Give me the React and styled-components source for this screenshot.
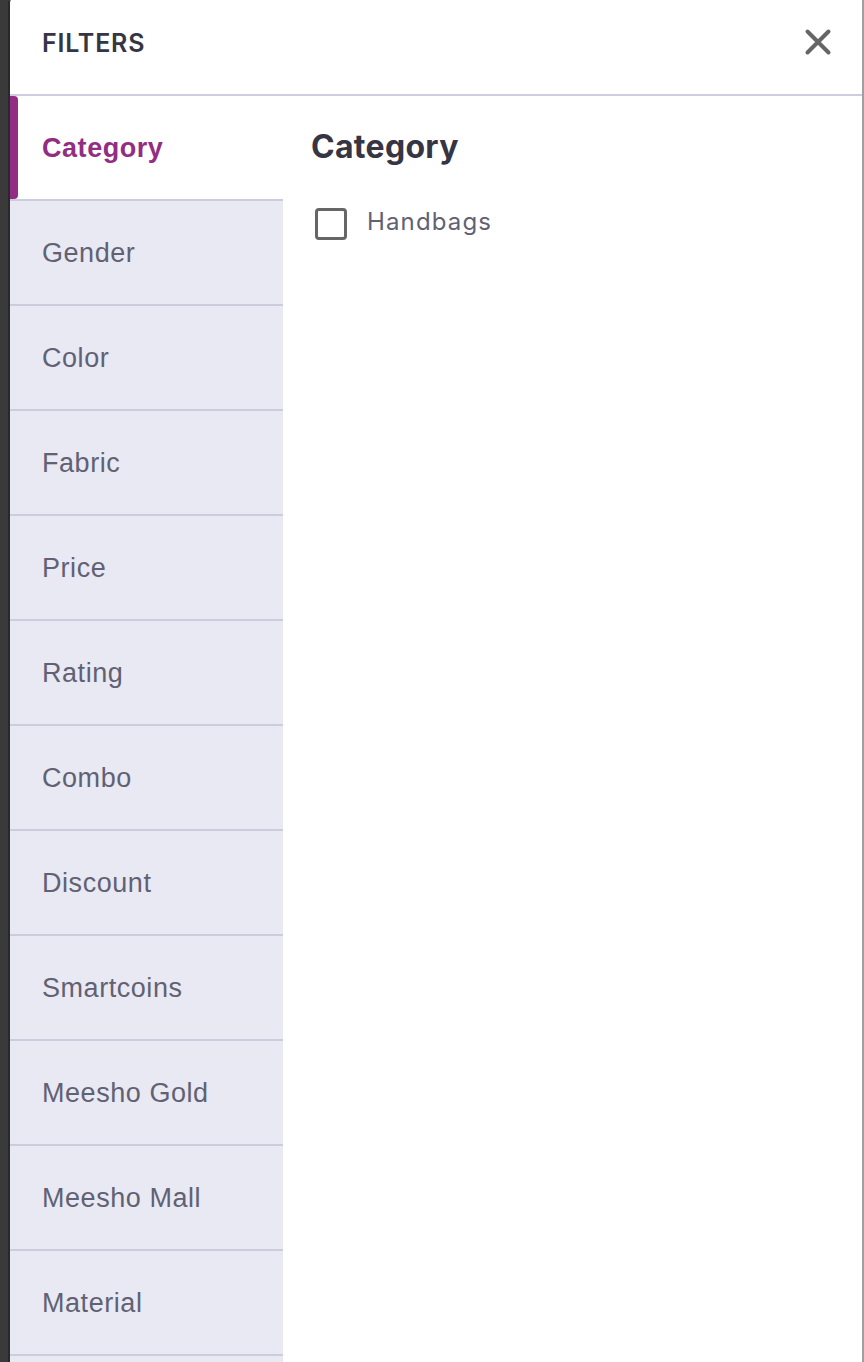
import React, { useState } from 'react';
import styled, { createGlobalStyle } from 'styled-components';

const GlobalStyle = createGlobalStyle`
    * {
        box-sizing: border-box;
    }
    body {
        margin: 0;
        background-color: #3a3a3a;
        overflow: hidden;
    }
    h2, h3 {
        margin: 0;
    }
    button {
        font: inherit;
        cursor: pointer;
    }
`;

const Backdrop = styled.div`
    display: flex;
    height: 1362px;
    padding-left: 8px;
    background-color: #3a3a3a;
    overflow: hidden;
`;

const Drawer = styled.aside`
    flex: 1;
    display: flex;
    flex-direction: column;
    border-left: 2px solid #29282d;
    border-right: 2px solid #a0a0a0;
    border-top-left-radius: 3px;
    background-color: #ffffff;
`;

const Header = styled.header`
    display: flex;
    align-items: center;
    justify-content: space-between;
    flex-shrink: 0;
    height: 96px;
    padding: 0 30px 10px 32px;
    border-bottom: 2px solid #ceccde;
`;

const HeaderTitle = styled.h2`
    padding-top: 2px;
    font-family: 'Inter', sans-serif;
    font-size: 25px;
    line-height: 32px;
    font-weight: 600;
    letter-spacing: 0.8px;
    text-transform: uppercase;
    color: #353543;
`;

const CloseButton = styled.button`
    display: flex;
    padding: 0;
    border: none;
    background: none;
    color: #666666;
`;

const Body = styled.div`
    display: flex;
    flex: 1;
    min-height: 0;
`;

const TabList = styled.nav`
    width: 273px;
    flex-shrink: 0;
    overflow: hidden;
    background-color: #e9e9f3;
`;

const Tab = styled.button`
    display: flex;
    align-items: stretch;
    width: 100%;
    height: 105px;
    padding: 0;
    border: none;
    border-bottom: 2px solid #ceccdc;
    background-color: ${({ $active }) => ($active ? '#ffffff' : '#e9e9f3')};
    color: ${({ $active }) => ($active ? '#932d83' : '#616173')};
    font-family: 'Liberation Sans', Arial, sans-serif;
    font-size: 27px;
    font-weight: ${({ $active }) => ($active ? 700 : 400)};
    line-height: 31px;
    letter-spacing: 0.55px;
    text-align: left;
`;

const TabMarker = styled.span`
    width: 8px;
    border-radius: 0 4px 4px 0;
    background-color: ${({ $active }) => ($active ? '#932d83' : 'transparent')};
`;

const TabLabel = styled.span`
    align-self: center;
    padding: 1px 0 0 24px;
`;

const Panel = styled.section`
    flex: 1;
    padding: 30px 28px;
`;

const PanelTitle = styled.h3`
    font-family: 'Inter', sans-serif;
    font-size: 32px;
    line-height: 42px;
    font-weight: 700;
    letter-spacing: 0.3px;
    color: #353543;
`;

const Option = styled.label`
    display: flex;
    align-items: flex-start;
    margin-top: 37px;
    padding-left: 4px;
    cursor: pointer;
`;

const Checkbox = styled.input`
    appearance: none;
    width: 32px;
    height: 32px;
    margin: 3px 20px 0 0;
    border: 3px solid #666666;
    border-radius: 4px;
    background-color: ${({ checked }) => (checked ? '#932d83' : '#ffffff')};
`;

const OptionLabel = styled.span`
    padding-top: 1px;
    font-family: 'Inter', sans-serif;
    font-size: 24px;
    line-height: 32px;
    letter-spacing: 1.15px;
    color: #616173;
`;

const filters = [
    { name: 'Category', options: ['Handbags'] },
    { name: 'Gender', options: [] },
    { name: 'Color', options: [] },
    { name: 'Fabric', options: [] },
    { name: 'Price', options: [] },
    { name: 'Rating', options: [] },
    { name: 'Combo', options: [] },
    { name: 'Discount', options: [] },
    { name: 'Smartcoins', options: [] },
    { name: 'Meesho Gold', options: [] },
    { name: 'Meesho Mall', options: [] },
    { name: 'Material', options: [] },
];

function CloseIcon() {
    return (
        <svg width="28" height="28" viewBox="0 0 28 28" fill="none" stroke="currentColor" strokeWidth="4" strokeLinecap="round">
            <path d="M3.5 3.5l21 21M24.5 3.5l-21 21" />
        </svg>
    );
}

function App() {
    const [active, setActive] = useState(0);
    const [selected, setSelected] = useState([]);

    const toggle = (option) => {
        setSelected(selected.includes(option) ? selected.filter((o) => o !== option) : [...selected, option]);
    };

    return (
        <>
            <GlobalStyle />
            <Backdrop>
                <Drawer>
                    <Header>
                        <HeaderTitle>Filters</HeaderTitle>
                        <CloseButton aria-label="Close"><CloseIcon /></CloseButton>
                    </Header>
                    <Body>
                        <TabList>
                            {filters.map((filter, i) => (
                                <Tab key={filter.name} $active={i === active} onClick={() => setActive(i)}>
                                    <TabMarker $active={i === active} />
                                    <TabLabel>{filter.name}</TabLabel>
                                </Tab>
                            ))}
                        </TabList>
                        <Panel>
                            <PanelTitle>{filters[active].name}</PanelTitle>
                            {filters[active].options.map((option) => (
                                <Option key={option}>
                                    <Checkbox type="checkbox" checked={selected.includes(option)} onChange={() => toggle(option)} />
                                    <OptionLabel>{option}</OptionLabel>
                                </Option>
                            ))}
                        </Panel>
                    </Body>
                </Drawer>
            </Backdrop>
        </>
    );
}

export default App;
